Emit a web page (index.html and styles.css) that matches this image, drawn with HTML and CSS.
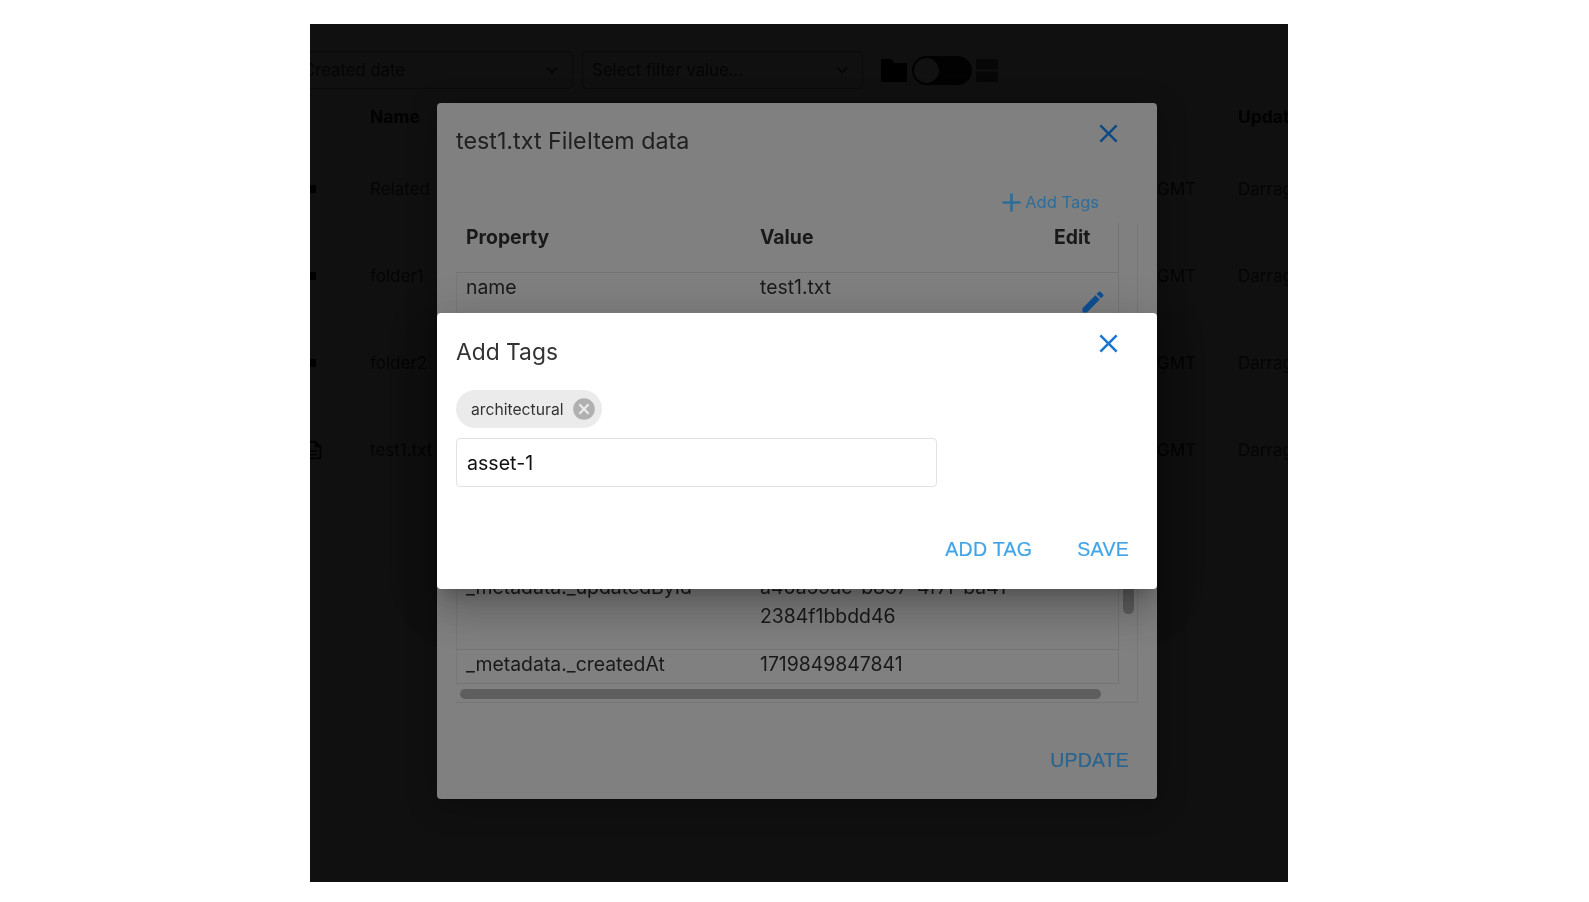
FILE: index.html
```html
<!DOCTYPE html>
<html lang="en">
<head>
<meta charset="utf-8">
<title>Add Tags</title>
<link rel="stylesheet" href="styles.css">
</head>
<body>
<div class="frame">
  <div class="page">
    <div class="toolbar">
      <div class="select select-a"><span>Created date</span><svg class="chev" viewBox="0 0 16 16"><path d="M3 5.5l5 5 5-5"/></svg></div>
      <div class="select select-b"><span>Select filter value...</span><svg class="chev" viewBox="0 0 16 16"><path d="M3 5.5l5 5 5-5"/></svg></div>
      <svg class="tool-folder" viewBox="0 0 26 23"><path d="M1 0h10l2 4h12a1 1 0 0 1 1 1v17a1 1 0 0 1-1 1H1a1 1 0 0 1-1-1V1a1 1 0 0 1 1-1z"/></svg>
      <div class="toggle"><span class="knob"></span></div>
      <svg class="tool-list" viewBox="0 0 22 23"><rect width="22" height="10.5" rx="1"/><rect y="12.5" width="22" height="10.5" rx="1"/></svg>
    </div>
    <div class="list">
      <div class="list-row list-head"><span></span><b>Name</b><span></span><b>Updated by</b></div>
      <div class="list-row"><span class="dot"></span><span>Related</span><span>GMT</span><span>Darragh</span></div>
      <div class="list-row"><span class="dot"></span><span>folder1</span><span>GMT</span><span>Darragh</span></div>
      <div class="list-row"><span class="dot"></span><span>folder2</span><span>GMT</span><span>Darragh</span></div>
      <div class="list-row"><svg class="file" viewBox="0 0 24 24"><path d="M14 2H6c-1.1 0-2 .9-2 2v16c0 1.1.9 2 2 2h12c1.1 0 2-.9 2-2V8l-6-6zm4 18H6V4h7v5h5v11zM8 12h8v2H8zm0 4h8v2H8z"/></svg><span>test1.txt</span><span>GMT</span><span>Darragh</span></div>
    </div>
  </div>

  <section class="dialog dialog-back">
    <header class="dialog-head">
      <h2>test1.txt FileItem data</h2>
      <svg class="close" viewBox="0 0 24 24"><path d="M19 6.41 17.59 5 12 10.59 6.41 5 5 6.41 10.59 12 5 17.59 6.41 19 12 13.41 17.59 19 19 17.59 13.41 12z"/></svg>
    </header>
    <div class="add-tags">
      <svg viewBox="0 0 24 24"><path d="M19 13h-6v6h-2v-6H5v-2h6V5h2v6h6v2z"/></svg><span>Add Tags</span>
    </div>
    <div class="scroller">
      <div class="data">
        <div class="data-row data-head"><b>Property</b><b>Value</b><b>Edit</b></div>
        <div class="data-row row-name"><span>name</span><span>test1.txt</span>
          <svg class="pencil" viewBox="0 0 24 24"><path d="M3 17.25V21h3.75L17.81 9.94l-3.75-3.75L3 17.25zM20.71 7.04c.39-.39.39-1.02 0-1.41l-2.34-2.34c-.39-.39-1.02-.39-1.41 0l-1.83 1.83 3.75 3.75 1.83-1.83z"/></svg>
        </div>
        <div class="data-row row-updated"><span>_metadata._updatedById</span><span>a40a59ac-b837-4f7f-ba41-<br>2384f1bbdd46</span></div>
        <div class="data-row row-created"><span>_metadata._createdAt</span><span>1719849847841</span></div>
      </div>
      <span class="bar-v"></span>
      <span class="bar-h"></span>
    </div>
    <footer class="dialog-foot"><span class="update">UPDATE</span></footer>
  </section>

  <section class="dialog dialog-front">
    <header class="dialog-head front-head">
      <h2>Add Tags</h2>
      <svg class="close" viewBox="0 0 24 24"><path d="M19 6.41 17.59 5 12 10.59 6.41 5 5 6.41 10.59 12 5 17.59 6.41 19 12 13.41 17.59 19 19 17.59 13.41 12z"/></svg>
    </header>
    <div class="chip"><span>architectural</span>
      <svg viewBox="0 0 24 24"><path d="M12 2C6.47 2 2 6.47 2 12s4.47 10 10 10 10-4.47 10-10S17.53 2 12 2zm5 13.59L15.59 17 12 13.41 8.41 17 7 15.59 10.59 12 7 8.41 8.41 7 12 10.59 15.59 7 17 8.41 13.41 12 17 15.59z"/></svg>
    </div>
    <div class="field">asset-1</div>
    <footer class="actions"><span>ADD TAG</span><span>SAVE</span></footer>
  </section>
</div>
</body>
</html>
```
FILE: styles.css
```css
* { box-sizing: border-box; }
html, body { margin: 0; height: 100%; background: #fff; }
body { font-family: Inter, "Liberation Sans", sans-serif; padding: 24px 0 0 310px; overflow: hidden; }
h2 { margin: 0; font-weight: 400; }
svg { display: block; flex: none; }

.frame { position: relative; width: 978px; height: 858px; background: #101010; overflow: hidden; filter: blur(.35px); }
.page { color: #050505; font-size: 17px; }

.toolbar { display: flex; align-items: center; height: 38px; margin: 27px 0 0 -20px; }
.select { display: flex; align-items: center; justify-content: space-between; height: 38px; border: 1px solid #0a0a0a; border-radius: 5px; color: #050505; font-size: 16.7px; padding: 0 12px 0 9px; }
.select-a { width: 283px; padding-left: 12px; }
.select-b { width: 281px; margin-left: 9px; }
.chev { width: 16px; height: 16px; fill: none; stroke: #050505; stroke-width: 1.5; }
.tool-folder { width: 26px; height: 23px; margin-left: 18px; fill: #000; }
.toggle { width: 60px; height: 29px; margin-left: 5px; border-radius: 15px; background: #020202; padding: 2px; }
.knob { display: block; width: 25px; height: 25px; border-radius: 50%; background: #111; }
.tool-list { width: 22px; height: 23px; margin-left: 4px; fill: #070707; }

.list { margin-top: 6px; }
.list-row { display: grid; grid-template-columns: 60px 787px 81px 200px; height: 87px; align-items: center; white-space: nowrap; }
.list-row b { color: #020202; font-size: 17.5px; }
.list-head { height: 50px; padding-bottom: 8px; }
.dot { width: 6px; height: 8px; background: #000; }
.file { width: 22px; height: 22px; margin-left: -7px; fill: #020202; }

.dialog { position: absolute; left: 127px; width: 720px; border-radius: 4px; }
.dialog-back { top: 79px; height: 696px; background: #808080; color: #191919; padding: 0 19px; box-shadow: 0 6px 30px rgba(0,0,0,.3); }
.dialog-front { top: 289px; height: 276px; background: #fff; color: #333; padding: 0 19px; box-shadow: 0 11px 15px -7px rgba(0,0,0,.2), 0 24px 38px 3px rgba(0,0,0,.14), 0 9px 46px 8px rgba(0,0,0,.12); }

.dialog-head { display: flex; justify-content: space-between; align-items: flex-start; height: 74px; padding-top: 16px; }
.dialog-head h2 { font-size: 23.3px; line-height: 44px; }
.dialog-back h2 { color: #202020; }
.close { width: 31px; height: 31px; margin: -1px 14px 0 0; }
.dialog-back .close { fill: #0f4a85; }
.dialog-front .close { fill: #1976d2; }

.add-tags { display: flex; justify-content: flex-end; align-items: center; height: 46px; padding: 4px 39px 0 0; color: #2f6c96; font-size: 16.5px; }
.add-tags svg { width: 31px; height: 31px; margin-right: -2px; fill: #2f6c96; }

.scroller { position: relative; width: 682px; height: 480px; border-right: 1px solid #767676; border-bottom: 1px solid #767676; overflow: hidden; }
.data { width: 663px; height: 461px; border-right: 1px solid #747474; border-bottom: 1px solid #747474; font-size: 19.4px; }
.data-row { display: grid; grid-template-columns: 294px 294px 1fr; padding-left: 9px; border-top: 1px solid #747474; border-left: 1px solid #787878; line-height: 29px; position: relative; }
.data-head { height: 49px; border: 0; padding-left: 10px; }
.row-name { height: 301px; }
.row-updated { height: 76px; border-top: 0; }
.row-created { height: 35px; }
.pencil { position: absolute; left: 622px; top: 15px; width: 28px; height: 28px; fill: #0f4f92; }
.bar-v { position: absolute; right: 3px; top: 300px; width: 11px; height: 91px; border-radius: 6px; background: #5e5e5e; }
.bar-h { position: absolute; left: 4px; top: 466px; width: 641px; height: 10px; border-radius: 5px; background: #5e5e5e; }

.dialog-foot { display: flex; justify-content: flex-end; padding: 46px 9px 0 0; }
.update { color: #2a658f; font-size: 19.5px; letter-spacing: .2px; font-family: "Liberation Sans", sans-serif; -webkit-text-stroke: .2px #2a658f; }

.front-head { height: 77px; }
.front-head h2 { font-size: 22.8px; margin-top: 1px; }
.chip { display: inline-flex; align-items: center; justify-content: space-between; width: 146px; height: 38px; border-radius: 19px; background: #ebebeb; padding: 0 5px 0 15px; font-size: 15.7px; color: #333; }
.chip svg { width: 26px; height: 26px; fill: #b0b0b0; }
.field { width: 481px; height: 49px; margin-top: 10px; border: 1px solid #e2e2e2; border-radius: 4px; padding: 1px 10px 0; line-height: 47px; font-size: 19.6px; color: #111; }
.actions { display: flex; justify-content: flex-end; gap: 45px; padding: 51px 9px 0 0; color: #42a5e8; font-size: 19.5px; font-family: "Liberation Sans", sans-serif; letter-spacing: .3px; -webkit-text-stroke: .2px #42a5e8; }
```
